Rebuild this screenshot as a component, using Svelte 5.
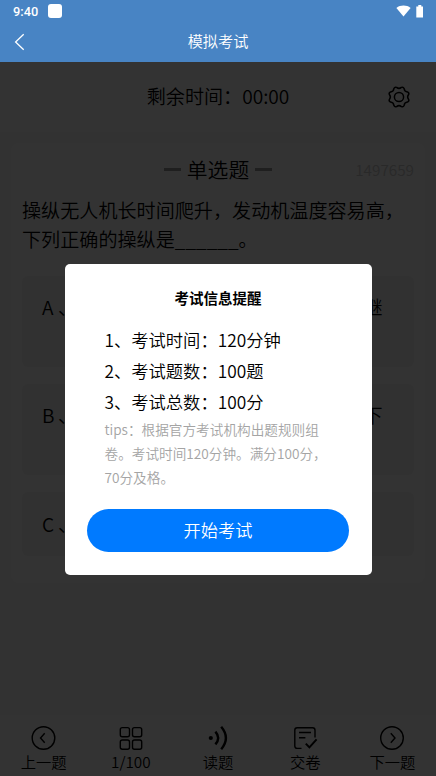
<script>
  let question = {
    id: 1497659,
    type: '单选题',
    text: '操纵无人机长时间爬升，发动机温度容易高，下列正确的操纵是______。',
    options: [
      { key: 'A', text: '适时定高飞行，待各指标正常后再继续爬升' },
      { key: 'B', text: '发现发动机各参数不正常时迅速转下降' },
      { key: 'C', text: '不必操纵，信任发动机自身性能' }
    ]
  };

  let rules = ['1、考试时间：120分钟', '2、考试题数：100题', '3、考试总数：100分'];

  let tabs = [
    { icon: 'prev', label: '上一题' },
    { icon: 'grid', label: '1/100' },
    { icon: 'sound', label: '读题' },
    { icon: 'submit', label: '交卷' },
    { icon: 'next', label: '下一题' }
  ];

  let showModal = $state(true);
</script>

<div class="page">
  <header>
    <div class="status">
      <span class="clock">9:40</span>
      <span class="chip"></span>
      <svg class="wifi" width="15" height="12" viewBox="0 0 15 12">
        <path d="M0.4 2.9C4.4-.3 10.6-.3 14.6 2.9L7.5 11.6Z" fill="#fff" />
      </svg>
      <svg width="8" height="13" viewBox="0 0 8 13">
        <path d="M2.3 0h3v1.4H7v11.1H.3V1.4h2z" fill="#fff" />
      </svg>
    </div>
    <div class="nav">
      <svg width="12" height="18" viewBox="0 0 12 18">
        <path d="M9.7 1.3L1.6 9l8.1 7.7" fill="none" stroke="#fff" stroke-width="1.3" />
      </svg>
      <h1>模拟考试</h1>
    </div>
  </header>

  <div class="timer">
    <span>剩余时间：00:00</span>
    <svg class="gear" width="24" height="24" viewBox="-12 -12 24 24">
      <path d="M-2.4-9.6Q0-7.6 2.4-9.6Q4.3-10.4 5.1-8.5Q5.4-5.4 8.5-5.1Q10.4-4.3 9.6-2.4Q7.6 0 9.6 2.4Q10.4 4.3 8.5 5.1Q5.4 5.4 5.1 8.5Q4.3 10.4 2.4 9.6Q0 7.6-2.4 9.6Q-4.3 10.4-5.1 8.5Q-5.4 5.4-8.5 5.1Q-10.4 4.3-9.6 2.4Q-7.6 0-9.6-2.4Q-10.4-4.3-8.5-5.1Q-5.4-5.4-5.1-8.5Q-4.3-10.4-2.4-9.6Z" />
      <circle r="4.6" />
    </svg>
  </div>

  <main>
    <div class="type">
      <i></i>
      <span>{question.type}</span>
      <div class="right">
        <i></i>
        <span class="number">{question.id}</span>
      </div>
    </div>
    <p class="question">{question.text}</p>
    {#each question.options as option}
      <div class="option">
        <span class="key">{option.key}</span>
        <span class="sep">、</span>
        <span class="answer">{option.text}</span>
      </div>
    {/each}
  </main>

  <footer>
    {#each tabs as tab}
      <div class="tab">
        <svg width="26" height="26" viewBox="0 0 26 26">
          {#if tab.icon === 'prev'}
            <circle cx="12.5" cy="13" r="11.3" />
            <path d="M13.7 8.2L9.5 13l4.2 4.8" />
          {:else if tab.icon === 'grid'}
            <rect x="2.3" y="2.6" width="9.2" height="9.2" rx="2" />
            <rect x="14.5" y="2.6" width="9.2" height="9.2" rx="2" />
            <rect x="2.3" y="15" width="9.2" height="9.2" rx="2" />
            <rect x="14.5" y="15" width="9.2" height="9.2" rx="2" />
          {:else if tab.icon === 'sound'}
            <circle class="dot" cx="5.8" cy="13" r="2.1" />
            <path class="wave" d="M10.4 6.6Q16 13 10.4 19.4M16.2 1.8Q25.6 13 16.2 24.2" />
          {:else if tab.icon === 'submit'}
            <path d="M9.5 23.4H5.2Q2.8 23.4 2.8 21V5.2Q2.8 2.8 5.2 2.8H20.6Q23 2.8 23 5.2V12.4M7 7.5H19M7 12.7H13.4" />
            <path class="tick" d="M13.8 18.6L17.4 22.4L24.6 14.4" />
          {:else}
            <circle cx="13" cy="13" r="11.3" />
            <path d="M11.8 8.2L16 13l-4.2 4.8" />
          {/if}
        </svg>
        <span>{tab.label}</span>
      </div>
    {/each}
  </footer>
</div>

{#if showModal}
  <div class="mask">
    <div class="modal">
      <h2>考试信息提醒</h2>
      <div class="info">
        {#each rules as rule}
          <p>{rule}</p>
        {/each}
        <p class="tips">tips：根据官方考试机构出题规则组卷。考试时间120分钟。满分100分，70分及格。</p>
      </div>
      <button onclick={() => (showModal = false)}>开始考试</button>
    </div>
  </div>
{/if}

<style>
  :global(body) {
    background: #f8f8f8;
  }

  .page,
  .mask {
    font-family: 'Noto Sans CJK SC', sans-serif;
    font-weight: 350;
    color: #000;
  }

  .page {
    display: flex;
    flex-direction: column;
    height: 776px;
    overflow: hidden;
  }

  h1,
  h2,
  p {
    margin: 0;
  }

  header {
    height: 62px;
    flex-shrink: 0;
    background: #4884c4;
    color: #fff;
  }

  .status {
    display: flex;
    align-items: center;
    height: 22px;
    padding: 0 12px 0 13px;
  }

  .clock {
    width: 35px;
    font: 500 12.8px/22px Roboto, sans-serif;
    padding-top: 1px;
  }

  .chip {
    width: 14px;
    height: 14px;
    border-radius: 3px;
    background: #fff;
  }

  .wifi {
    margin-left: auto;
    margin-right: 5px;
  }

  .nav {
    display: flex;
    align-items: center;
    height: 40px;
    padding: 0 14px;
  }

  h1 {
    flex: 1;
    margin-right: 12px;
    padding-bottom: 4px;
    text-align: center;
    font-size: 15.2px;
    line-height: 36px;
    font-weight: 350;
  }

  .timer {
    display: grid;
    grid-template-columns: 1fr auto 1fr;
    align-items: center;
    height: 70px;
    flex-shrink: 0;
    padding: 0 25px;
    background: #fff;
    font-size: 19.1px;
  }

  .timer span {
    grid-column: 2;
    padding-bottom: 2px;
  }

  .gear {
    justify-self: end;
    fill: none;
    stroke: #000;
    stroke-width: 1.5;
  }

  main {
    height: 440px;
    flex-shrink: 0;
    margin: 11px 11px 0;
    padding: 11px 11px 0;
    box-sizing: border-box;
    border-radius: 8px;
    background: #fff;
  }

  .type {
    display: grid;
    grid-template-columns: 1fr auto 1fr;
    align-items: center;
    column-gap: 6px;
    height: 31px;
    font-size: 20.8px;
    line-height: 31px;
  }

  .type i {
    width: 17px;
    height: 3px;
    background: #999;
  }

  .type > i {
    justify-self: end;
  }

  .right {
    display: flex;
    align-items: center;
    justify-content: space-between;
  }

  .number {
    font-size: 15.3px;
    color: #ccc;
  }

  .question {
    margin: 11px 0 23px;
    font-size: 19.1px;
    line-height: 28.5px;
  }

  .option {
    display: flex;
    height: 91px;
    margin-bottom: 17px;
    padding: 17px 20px 0;
    box-sizing: border-box;
    border-radius: 6px;
    background: #f4f4f4;
    font-size: 19.1px;
    line-height: 28.5px;
  }

  .option:last-child {
    height: 64px;
    padding-top: 18px;
  }

  .key {
    width: 16px;
  }

  .sep {
    width: 19px;
  }

  .answer {
    flex: 1;
  }

  footer {
    display: flex;
    height: 61px;
    margin-top: auto;
    background: #fff;
  }

  .tab {
    display: flex;
    flex: 1;
    flex-direction: column;
    align-items: center;
    padding-top: 10px;
    font-size: 15.3px;
    line-height: 20px;
  }

  .tab svg {
    flex-shrink: 0;
    fill: none;
    stroke: #000;
    stroke-width: 1.4;
  }

  .tab .dot {
    fill: #000;
    stroke: none;
  }

  .tab .wave {
    stroke-width: 2.4;
  }

  .tab .tick {
    stroke-width: 2;
  }

  .mask {
    position: fixed;
    inset: 62px 0 0;
    display: flex;
    align-items: center;
    justify-content: center;
    background: rgba(0, 0, 0, 0.8);
  }

  .modal {
    width: 307px;
    height: 311px;
    padding: 23px 22px 0;
    box-sizing: border-box;
    border-radius: 5px;
    background: #fff;
  }

  h2 {
    text-align: center;
    font-size: 14.5px;
    line-height: 21px;
    font-weight: 700;
  }

  .info {
    padding: 16px 18px 0;
    font-size: 17.3px;
    line-height: 31px;
  }

  .info .tips {
    color: #a4a4a4;
    font-size: 13.65px;
    line-height: 24.4px;
  }

  button {
    display: block;
    width: 262px;
    height: 43.5px;
    margin-top: 19px;
    padding: 0 0 0 1px;
    border: 0;
    border-radius: 22px;
    background: #007aff;
    color: #fff;
    font-family: inherit;
    font-weight: inherit;
    font-size: 17.2px;
    line-height: 42px;
  }
</style>
